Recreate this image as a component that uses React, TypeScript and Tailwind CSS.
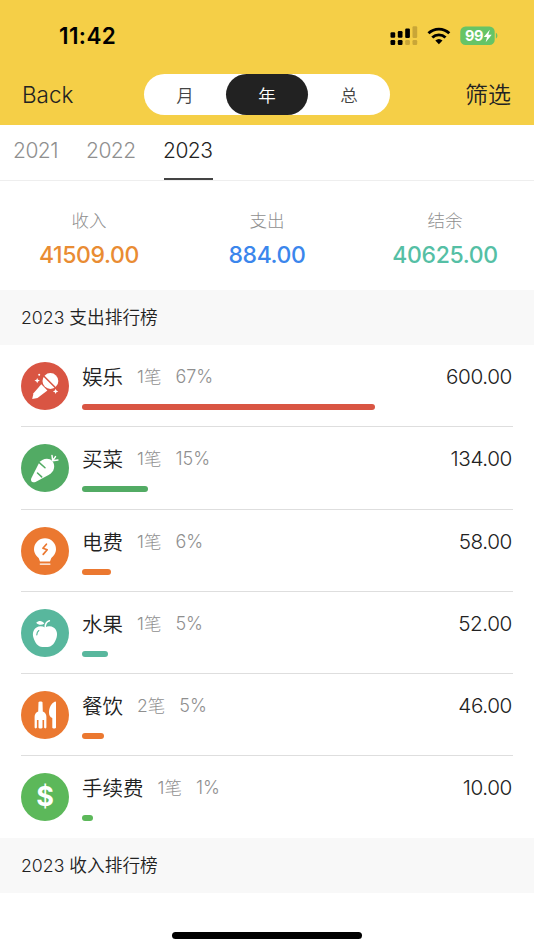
import type { ReactNode } from 'react';

const MicIcon = () => (
  <svg viewBox="0 0 48 48" className="size-12" fill="#fff">
    <circle cx="29.4" cy="19" r="7.9" />
    <path d="M21.500 12.800 36 27.200" stroke="#d95543" strokeWidth="1.6" />
    <path d="M20.300 22.300 26.400 28.600 16.500 36 11.200 37 12.500 31.300Z" />
    <path d="M16.200 15.900l.8 1.900 1.900.8-1.900.8-.8 1.900-.8-1.900-1.900-.8 1.900-.8zM34.600 26.700l.8 1.900 1.900.8-1.900.8-.8 1.900-.8-1.900-1.900-.8 1.900-.8z" />
    <circle cx="18.2" cy="12.7" r="1" />
  </svg>
);

const CarrotIcon = () => (
  <svg viewBox="0 0 48 48" className="size-12" fill="#fff">
    <path d="M18 19C20.500 14.500 28 13 31.300 17 35 21.500 33 28 28 30.800L14.500 37.900C11.500 39.200 9.200 37 10.300 34.200Z" />
    <path d="M18 18.400l6 5.400M16.500 29l4.200 3.900" stroke="#52ab64" strokeWidth="1.500" strokeLinecap="round" />
    <path d="M31.700 16.700 31 11.500M31.700 16.700 34.500 12.600M31.700 16.700l5.200-.6" stroke="#fff" strokeWidth="1.500" strokeLinecap="round" />
  </svg>
);

const BulbIcon = () => (
  <svg viewBox="0 0 48 48" className="size-12" fill="#fff">
    <path d="M24 11.300A11 11 0 0 0 13 22.300c0 4.200 2.500 6.500 4.800 9l1.200 3.200h10l1.200-3.200c2.300-2.500 4.800-4.800 4.800-9A11 11 0 0 0 24 11.300Z" />
    <path d="M19.300 37.100h9.600" stroke="#fff" strokeWidth="1.400" strokeLinecap="round" />
    <path d="M25.400 17.200l-3.500 4 4.300 1.600-4 4.600" fill="none" stroke="#eb7830" strokeWidth="1.700" strokeLinejoin="round" strokeLinecap="round" />
  </svg>
);

const FruitIcon = () => (
  <svg viewBox="0 0 48 48" className="size-12" fill="#fff">
    <path d="M24 18.600c2.500-1.600 6-1.600 8.500-.2 3.200 2 4.300 6 3.100 10-1.400 5-4.600 9.500-9 9.500h-5.200c-4.400 0-7.600-4.500-9-9.500-1.200-4-.1-8 3.100-10 2.500-1.400 6-1.400 8.500.2Z" />
    <path d="M24.200 18.500c0-3.500 1.200-6 4.200-6.700" fill="none" stroke="#fff" strokeWidth="1.500" strokeLinecap="round" />
    <path d="M15.200 13.800c2.500-2.700 6-2.500 8.200.7-2.500 2-6 1.800-8.200-.7Z" />
    <path d="M15.800 25.800c.1-1.800.8-3.300 2-4.200" fill="none" stroke="#58b79d" strokeWidth="1.200" strokeLinecap="round" />
  </svg>
);

const DiningIcon = () => (
  <svg viewBox="0 0 48 48" className="size-12" fill="#fff">
    <path d="M17.500 11.200c0-1.100 4-1.100 4 0l.3 9.300c2.200.9 3.600 2.700 3.600 5.300v10.500c0 1.500-2.300 1.500-2.300 0V29h-1.600v7.600c0 1.300-4 1.300-4 0V29h-1.600v7.300c0 1.500-2.300 1.500-2.300 0V25.800c0-2.600 1.400-4.400 3.600-5.300Z" />
    <path d="M35 11.500v25c0 1.400-3.700 1.400-3.700 0V26.900c-2.200-.6-3.300-2.400-3.300-5.400 0-5 2.500-9.300 5.700-10.800.8-.3 1.300 0 1.300.8Z" />
  </svg>
);

const DollarIcon = () => (
  <span className="font-['Inter','Noto_Sans_CJK_SC',sans-serif] text-[27px] leading-none font-bold text-white">$</span>
);

type Row = {
  name: string;
  count: string;
  pct: string;
  value: string;
  color: string;
  bar: string;
  icon: ReactNode;
};

const rows: Row[] = [
  { name: '娱乐', count: '1笔', pct: '67%', value: '600.00', color: 'bg-[#d95543]', bar: 'w-[293px]', icon: <MicIcon /> },
  { name: '买菜', count: '1笔', pct: '15%', value: '134.00', color: 'bg-[#52ab64]', bar: 'w-[66px]', icon: <CarrotIcon /> },
  { name: '电费', count: '1笔', pct: '6%', value: '58.00', color: 'bg-[#eb7830]', bar: 'w-[29px]', icon: <BulbIcon /> },
  { name: '水果', count: '1笔', pct: '5%', value: '52.00', color: 'bg-[#58b79d]', bar: 'w-[26px]', icon: <FruitIcon /> },
  { name: '餐饮', count: '2笔', pct: '5%', value: '46.00', color: 'bg-[#eb7830]', bar: 'w-[22px]', icon: <DiningIcon /> },
  { name: '手续费', count: '1笔', pct: '1%', value: '10.00', color: 'bg-[#5cb85a]', bar: 'w-[11px]', icon: <DollarIcon /> },
];

const StatusIcons = () => (
  <svg viewBox="0 0 108 20" className="-mt-[3px] h-5 w-[108px]">
    <g fill="#000">
      <rect x="0.5" y="6.3" width="4.7" height="5.4" rx="1.2" />
      <rect x="7.8" y="5" width="4.7" height="6.7" rx="1.2" />
      <rect x="15.2" y="2.5" width="4.7" height="9.5" rx="1.2" />
      <rect x="0.5" y="14" width="4.7" height="5" rx="1.2" />
      <rect x="7.8" y="14" width="4.7" height="5" rx="1.2" />
    </g>
    <g fill="#c9a637">
      <rect x="22.5" y="0.3" width="4.7" height="11.7" rx="1.2" />
      <rect x="15.2" y="14" width="4.7" height="5" rx="1.2" />
      <rect x="22.5" y="14" width="4.7" height="5" rx="1.2" />
    </g>
    <g fill="none" stroke="#000" strokeWidth="2.9">
      <path d="M38.5 7.3a15 15 0 0 1 20.8 0" />
      <path d="M42.3 11.5a9.5 9.5 0 0 1 13.2 0" />
    </g>
    <path d="M48.9 18.2l-3.6-3.7a5.4 5.4 0 0 1 7.2 0Z" fill="#000" />
    <rect x="70.3" y="0.5" width="34.4" height="18.6" rx="5.2" fill="#66c466" />
    <path d="M105.9 6.8c2 1 2 4.800 0 5.800Z" fill="#66c466" />
    <text x="75" y="15" fill="#fff" fontSize="14.5" fontWeight="700" fontFamily="Inter" textLength="18.5">99</text>
    <path d="M99.800 3.800 93.800 11h3.200l-1.300 5.200 6-7.500h-3.400Z" fill="#fff" />
  </svg>
);

const SectionTitle = ({ children }: { children: ReactNode }) => (
  <h2 className="flex h-[55px] shrink-0 items-center bg-[#f8f8f8] pt-[2px] pl-[21px] text-[17.700px] font-[350] text-[#222]">
    {children}
  </h2>
);

const Total = ({ label, value, color }: { label: string; value: string; color: string }) => (
  <div className="flex flex-1 flex-col items-center">
    <span className="text-[17.500px] leading-6 font-light text-[#8f8f8f]">{label}</span>
    <span className={`mt-[10px] text-[23px] leading-6 font-medium tracking-[-0.36px] ${color}`}>{value}</span>
  </div>
);

export default function App() {
  return (
    <div className="flex h-[950px] w-[534px] flex-col overflow-hidden bg-white font-['Inter','Noto_Sans_CJK_SC',sans-serif] text-[#222]">
      <header className="h-[125px] shrink-0 bg-[#f5cf47]">
        <div className="flex h-[74px] items-center justify-between pr-[36px] pl-[59px]">
          <span className="-mt-[2px] text-[22.500px] leading-6 font-semibold tracking-[0.4px] text-black">11:42</span>
          <StatusIcons />
        </div>
        <div className="flex h-[41px] items-center justify-between pr-[23px] pl-[22px]">
          <button className="w-[122px] pt-px text-left text-[22.500px] leading-6 font-[350]">Back</button>
          <div className="flex h-[41px] w-[246px] rounded-full bg-white text-[17.500px] font-[350]">
            <button className="flex-1 pt-[3px] text-[#444]">月</button>
            <button className="flex-1 rounded-full bg-[#222] pt-[3px] text-white">年</button>
            <button className="flex-1 pt-[3px] text-[#444]">总</button>
          </div>
          <button className="w-[121px] pt-px text-right text-[23px] leading-6 font-[350]">筛选</button>
        </div>
      </header>

      <nav className="flex h-14 shrink-0 gap-7 border-b border-[#eee] pl-[14px] text-[21px] font-light text-[#8f8f8f]">
        <span className="h-[55px] w-[45px] pt-[10px] leading-8 tracking-[-0.5px]"><span className="-ml-px">2021</span></span>
        <span className="h-[55px] w-[49px] pt-[10px] leading-8 tracking-[-0.5px]"><span className="-ml-px">2022</span></span>
        <span className="h-[55px] w-[49px] border-b-2 border-[#444] pt-[10px] leading-8 font-[350] tracking-[-0.5px] text-[#222]"><span className="-ml-px">2023</span></span>
      </nav>

      <div className="flex h-[109px] shrink-0 pt-[28px]">
        <Total label="收入" value="41509.00" color="text-[#e98c33]" />
        <Total label="支出" value="884.00" color="text-[#3b86ec]" />
        <Total label="结余" value="40625.00" color="text-[#55bfa5]" />
      </div>

      <SectionTitle>2023 支出排行榜</SectionTitle>

      <ul className="h-[493px] shrink-0 pt-[0.2px] pl-[21px]">
        {rows.map((r, i) => (
          <li key={r.name} className={`mr-[21px] flex h-[82.170px] pt-[17px] ${i < rows.length - 1 ? 'border-b border-[#dedede]' : ''}`}>
            <div className={`flex size-12 shrink-0 items-center justify-center rounded-full ${r.color}`}>{r.icon}</div>
            <div className="ml-[13px] flex-1">
              <div className="flex h-[30px] items-center">
                <span className="pt-[2px] text-[20.500px] leading-7 font-[350]">{r.name}</span>
                <span className="ml-[14px] text-[17.500px] leading-6 font-light text-[#8f8f8f]">{r.count}</span>
                <span className="ml-[14px] text-[18px] leading-6 font-light text-[#8f8f8f]">{r.pct}</span>
                <span className="mr-px ml-auto text-[20.700px] leading-7 font-[350] tracking-[-0.4px]">{r.value}</span>
              </div>
              <div className={`mt-3 h-[6px] rounded-full ${r.color} ${r.bar}`} />
            </div>
          </li>
        ))}
      </ul>

      <SectionTitle>2023 收入排行榜</SectionTitle>

      <div className="flex flex-1 items-end justify-center pb-[11px]">
        <div className="h-[7px] w-[190px] rounded-full bg-black" />
      </div>
    </div>
  );
}
